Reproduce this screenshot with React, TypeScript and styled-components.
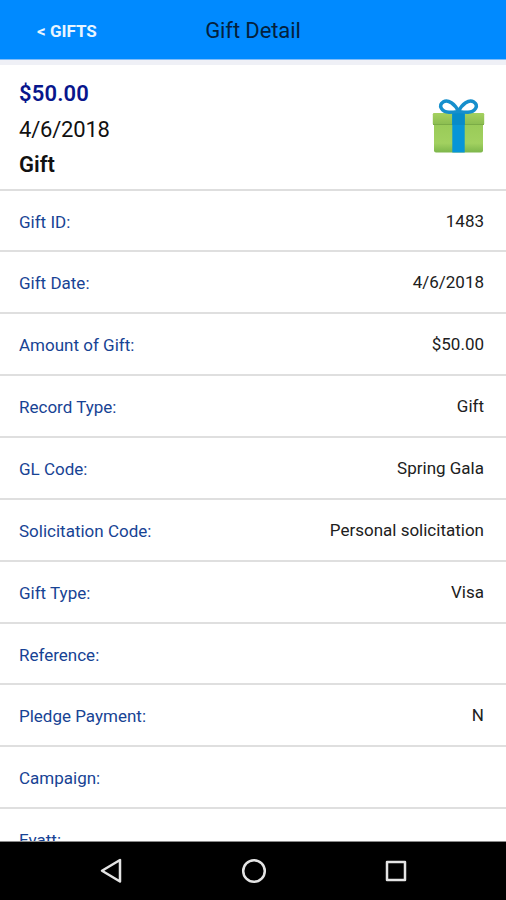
import React from 'react';
import styled, { createGlobalStyle } from 'styled-components';

const GlobalStyle = createGlobalStyle`
  * { box-sizing: border-box; }
  body { margin: 0; background: #fff; font-family: Roboto, sans-serif; }
`;

const Screen = styled.div`
  display: flex;
  flex-direction: column;
  width: 506px;
  height: 900px;
  overflow: hidden;
  background: #fff;
`;

const Header = styled.header`
  display: grid;
  grid-template-columns: 1fr auto 1fr;
  align-items: center;
  flex: none;
  height: 60px;
  padding-top: 3px;
  background: #008aff;
  border-bottom: 1px solid #82bdf8;
`;

const BackButton = styled.button`
  justify-self: start;
  margin: 0 0 0 37px;
  padding: 0;
  border: 0;
  background: none;
  color: #e8f5ff;
  font: 700 17px/22px Roboto, sans-serif;
  white-space: pre;
`;

const Title = styled.h1`
  margin: 0;
  color: #04203c;
  font-size: 22px;
  line-height: 26px;
  font-weight: 400;
  letter-spacing: -0.1px;
`;

const Content = styled.main`
  flex: 1;
  min-height: 0;
  overflow: hidden;
  border-top: 5px solid #eff0f6;
`;

const Summary = styled.section`
  display: flex;
  justify-content: space-between;
  height: 125.6px;
  padding: 11px 19px 0;
  border-bottom: 2px solid #dedede;
`;

const SummaryLine = styled.div<{ $color?: string; $weight?: number; $spacing?: number }>`
  height: 35.7px;
  line-height: 35.7px;
  font-size: 22px;
  font-weight: ${({ $weight = 400 }) => $weight};
  letter-spacing: ${({ $spacing = 0 }) => $spacing}px;
  color: ${({ $color = '#111' }) => $color};
`;

const GiftIcon = styled.svg`
  width: 56px;
  height: 60px;
  margin: 20px 0 0;
`;

const Row = styled.div`
  display: flex;
  justify-content: space-between;
  align-items: center;
  height: 61.86px;
  padding: 0 22px 0 19px;
  border-bottom: 2px solid #dfdfdf;
  font-size: 17px;
  line-height: 22px;
`;

const Label = styled.span`
  color: #174394;
  padding-top: 2px;
`;

const Value = styled.span`
  color: #202020;
`;

const NavBar = styled.nav`
  display: flex;
  justify-content: space-between;
  align-items: center;
  flex: none;
  height: 59px;
  padding: 0 95px 0 96px;
  background: #000;
  border-top: 1px solid #8a8a8a;
`;

const NavIcon = styled.svg`
  width: 30px;
  height: 30px;
  fill: none;
  stroke: #e4e4e4;
  stroke-width: 2.5;
  stroke-linejoin: round;
`;

const fields: [string, string][] = [
  ['Gift ID:', '1483'],
  ['Gift Date:', '4/6/2018'],
  ['Amount of Gift:', '$50.00'],
  ['Record Type:', 'Gift'],
  ['GL Code:', 'Spring Gala'],
  ['Solicitation Code:', 'Personal solicitation'],
  ['Gift Type:', 'Visa'],
  ['Reference:', ''],
  ['Pledge Payment:', 'N'],
  ['Campaign:', ''],
  ['Evatt:', ''],
];

function Present() {
  return (
    <GiftIcon viewBox="0 0 56 60" aria-hidden="true">
      <defs>
        <linearGradient id="box" x1="0" y1="0" x2="0" y2="1">
          <stop offset="0" stopColor="#98ca57" />
          <stop offset="0.7" stopColor="#a2d160" />
          <stop offset="1" stopColor="#7db64b" />
        </linearGradient>
        <linearGradient id="lid" x1="0" y1="0" x2="0" y2="1">
          <stop offset="0" stopColor="#a5d15f" />
          <stop offset="1" stopColor="#8abc50" />
        </linearGradient>
      </defs>
      <rect x="3" y="25" width="49" height="31.5" rx="2" fill="url(#box)" />
      <rect x="1.8" y="17" width="51.4" height="12" rx="1.2" fill="url(#lid)" />
      <path d="M2 28.5h51" stroke="#79aa45" strokeWidth="0.9" />
      <rect x="21.3" y="17" width="12.4" height="39.5" fill="#0795d8" />
      <rect x="21.3" y="17" width="12.4" height="12" fill="#078bc9" />
      <g fill="none" stroke="#168fcc" strokeWidth="3.4" strokeLinejoin="round">
        <path d="M27.5 15.5C24 8 17 3 12.5 5.8C6.5 9.5 11 16 18 16.2C22 16.3 25 15.8 27.5 15.5Z" />
        <path d="M27.5 15.5C31 8 38 3 42.5 5.8C48.5 9.5 44 16 37 16.2C33 16.3 30 15.8 27.5 15.5Z" />
      </g>
    </GiftIcon>
  );
}

export default function App() {
  return (
    <>
      <GlobalStyle />
      <Screen>
        <Header>
          <BackButton>{'< GIFTS'}</BackButton>
          <Title>Gift Detail</Title>
        </Header>
        <Content>
          <Summary>
            <div>
              <SummaryLine $color="#08168c" $weight={600} $spacing={0.15}>$50.00</SummaryLine>
              <SummaryLine $spacing={-0.2}>4/6/2018</SummaryLine>
              <SummaryLine $weight={600}>Gift</SummaryLine>
            </div>
            <Present />
          </Summary>
          {fields.map(([label, value]) => (
            <Row key={label}>
              <Label>{label}</Label>
              <Value>{value}</Value>
            </Row>
          ))}
        </Content>
        <NavBar>
          <NavIcon viewBox="0 0 30 30"><path d="M24 4V25.5L6 14.7Z" /></NavIcon>
          <NavIcon viewBox="0 0 30 30"><circle cx="15" cy="15" r="10.8" /></NavIcon>
          <NavIcon viewBox="0 0 30 30"><rect x="6" y="6" width="18" height="18" /></NavIcon>
        </NavBar>
      </Screen>
    </>
  );
}
